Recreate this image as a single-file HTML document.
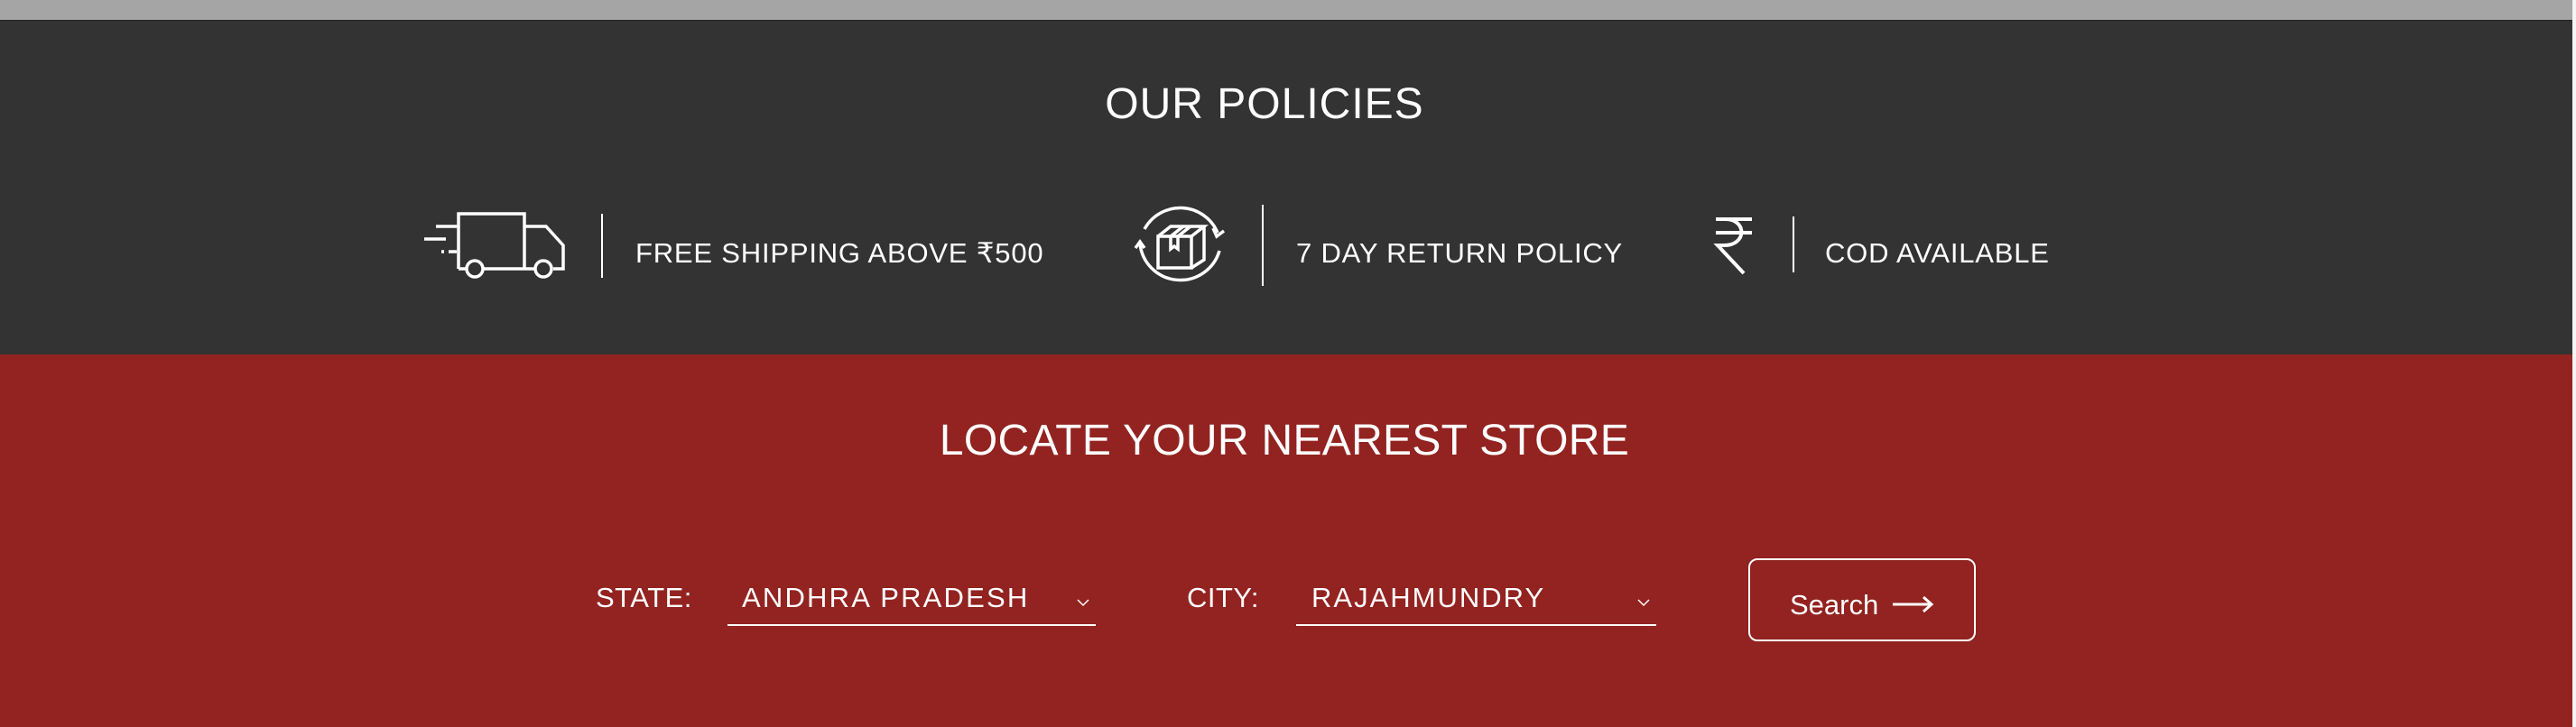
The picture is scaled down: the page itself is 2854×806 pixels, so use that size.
<!DOCTYPE html>
<html><head><meta charset="utf-8"><style>
html,body{margin:0;padding:0;width:2854px;height:806px;overflow:hidden;background:#f4f4f4;}
.wrap{position:absolute;left:0;top:0;width:2850px;height:806px;}
.gray{position:absolute;left:0;top:0;width:2850px;height:22px;background:#a5a5a5;border-bottom:1px solid #222;}
.dark{position:absolute;left:0;top:23px;width:2850px;height:370px;background:#333333;}
.red{position:absolute;left:0;top:393px;width:2850px;height:413px;background:#922320;}
.t{position:absolute;color:#fff;font-family:"Liberation Sans",sans-serif;white-space:nowrap;}
.vl{position:absolute;width:2px;background:#fff;}
.ul{position:absolute;height:2px;background:#fff;}
</style></head><body><div class="wrap">
<div class="gray"></div>
<div class="dark"></div>
<div class="red"></div>

<div class="t" style="left:0;width:2802px;text-align:center;top:88px;font-size:48px;letter-spacing:1px;">OUR POLICIES</div>

<svg style="position:absolute;left:460px;top:225px" width="180" height="95" viewBox="460 225 180 95" fill="none" stroke="#fff" stroke-width="3.5">
<path d="M508 298 V237 H581 V298"/>
<path d="M581 251 H605 L624 272 V298 H613"/>
<path d="M535 298 H593"/>
<path d="M517 298 H508"/>
<circle cx="526" cy="298" r="9"/>
<circle cx="602" cy="298" r="9"/>
<path d="M483 251 H507 M470 265 H494"/>
<path d="M489 279 H492 M497 279 H506"/>
</svg>
<div class="vl" style="left:666px;top:237px;height:71px"></div>
<div class="t" style="left:704px;top:263px;font-size:31px;letter-spacing:0.8px;">FREE SHIPPING ABOVE ₹500</div>

<svg style="position:absolute;left:1250px;top:220px" width="120" height="105" viewBox="1250 220 120 105" fill="none" stroke="#fff" stroke-width="3.5">
<path d="M1268 254 A45 45 0 0 1 1349 258"/>
<path d="M1344 253 L1348 262 L1356 256"/>
<path d="M1263 270 A45 45 0 0 0 1351 278"/>
<path d="M1258 275 L1263 268 L1268 275"/>
<path d="M1283 262 H1320 V297 H1283 Z"/>
<path d="M1283 262 L1297 251 H1334 L1320 262 M1334 251 V288 L1320 297"/>
<path d="M1297 262 V276 L1301 273 L1305 276 V262 M1297 262 L1311 251 M1305 262 L1319 251"/>
</svg>
<div class="vl" style="left:1398px;top:227px;height:90px"></div>
<div class="t" style="left:1436px;top:263px;font-size:31px;letter-spacing:0.8px;">7 DAY RETURN POLICY</div>

<svg style="position:absolute;left:1890px;top:235px" width="65" height="75" viewBox="1890 235 65 75" fill="none" stroke="#fff" stroke-width="4">
<path d="M1901 243 H1941 M1901 258 H1941"/>
<path d="M1912 243 C1935 243 1936 272 1910 272 L1903 272 L1932 303"/>
</svg>
<div class="vl" style="left:1986px;top:240px;height:62px"></div>
<div class="t" style="left:2022px;top:263px;font-size:31px;letter-spacing:0.8px;">COD AVAILABLE</div>

<div class="t" style="left:0;width:2846px;text-align:center;top:461px;font-size:48px;letter-spacing:0.3px;">LOCATE YOUR NEAREST STORE</div>

<div class="t" style="left:660px;top:645px;font-size:31px;letter-spacing:0.5px;">STATE:</div>
<div class="t" style="left:822px;top:645px;font-size:31px;letter-spacing:2.2px;">ANDHRA PRADESH</div>
<svg style="position:absolute;left:1192px;top:662px" width="16" height="12" fill="none" stroke="#fff" stroke-width="1.5"><path d="M2 3 L8 9 L14 3"/></svg>
<div class="ul" style="left:806px;top:692px;width:408px"></div>

<div class="t" style="left:1315px;top:645px;font-size:31px;letter-spacing:0.5px;">CITY:</div>
<div class="t" style="left:1453px;top:645px;font-size:31px;letter-spacing:2px;">RAJAHMUNDRY</div>
<svg style="position:absolute;left:1813px;top:662px" width="16" height="12" fill="none" stroke="#fff" stroke-width="1.5"><path d="M2 3 L8 9 L14 3"/></svg>
<div class="ul" style="left:1436px;top:692px;width:399px"></div>

<div style="position:absolute;left:1937px;top:619px;width:248px;height:88px;border:2px solid #fff;border-radius:10px;"></div>
<div class="t" style="left:1983px;top:653px;font-size:31px;">Search</div>
<svg style="position:absolute;left:2095px;top:658px" width="50" height="24" fill="none" stroke="#fff" stroke-width="3"><path d="M2 12 H44 M36 4 L45 12 L36 20"/></svg>
</div></body></html>
